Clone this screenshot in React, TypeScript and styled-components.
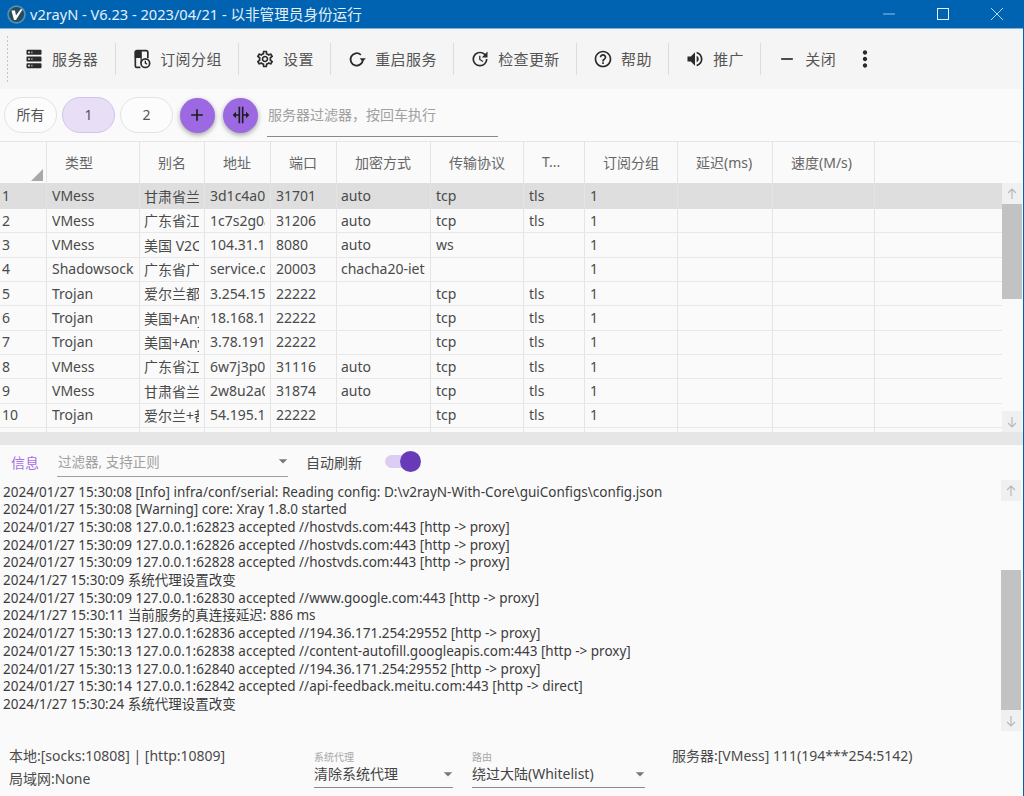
import React from 'react';
import styled, { createGlobalStyle } from 'styled-components';
import {
  MdAdd,
  MdArrowDropDown,
  MdHelpOutline,
  MdMoreVert,
  MdOutlineSettings,
  MdRemove,
  MdUpdate,
  MdVolumeUp,
} from 'react-icons/md';

const FONT = `"Noto Sans", "Noto Sans CJK SC", sans-serif`;
const COLUMNS = '47px 93px 65px 66px 66px 94px 93px 61px 93px 95px 102px 1fr';

const GlobalStyle = createGlobalStyle`
  html, body {
    margin: 0;
    padding: 0;
    background: #fafafa;
  }
  body {
    font-family: ${FONT};
    overflow: hidden;
  }
`;

const Window = styled.div`
  width: 1024px;
  height: 796px;
  display: flex;
  flex-direction: column;
  box-sizing: border-box;
  border-right: 1px solid #0063b1;
  background: #fafafa;
  color: #444;
  overflow: hidden;
`;

const TitleBar = styled.div`
  height: 29px;
  flex: none;
  box-sizing: border-box;
  display: flex;
  align-items: center;
  padding-left: 7px;
  background: #0063b1;
  border-bottom: 1px solid #7fb4de;
`;

const TitleText = styled.div`
  margin-left: 4px;
  padding-bottom: 1px;
  font-size: 14.6px;
  color: #e6f0f8;
  white-space: nowrap;
`;

const WindowControls = styled.div`
  margin-left: auto;
  margin-right: -1px;
  display: flex;
  align-items: center;
`;

const WindowButton = styled.div`
  width: 54px;
  height: 28px;
  display: flex;
  align-items: center;
  justify-content: center;
`;

const ToolBar = styled.div`
  height: 60px;
  flex: none;
  display: flex;
  align-items: center;
  background: #f5f5f5;
  padding-left: 6px;
`;

const Grip = styled.div`
  width: 3px;
  height: 48px;
  margin-right: 15px;
  background-image: radial-gradient(circle, #c4c4c4 1px, transparent 1.1px);
  background-size: 3px 4px;
`;

const ToolButton = styled.div<{ $first?: boolean }>`
  display: flex;
  align-items: center;
  gap: 8px;
  padding: 0 ${(p) => (p.$first ? 17 : 16.3)}px 0 ${(p) => (p.$first ? 0 : 16)}px;
  font-size: 15px;
  letter-spacing: 0.4px;
  color: #555;
  white-space: nowrap;
  svg {
    width: 20px;
    height: 20px;
    color: #2b2b2b;
    flex: none;
  }
`;

const ToolLabel = styled.span`
  margin-bottom: 2px;
`;

const ToolSeparator = styled.div`
  width: 1px;
  height: 32px;
  background: #dcdcdc;
  flex: none;
`;

const MoreButton = styled.div`
  display: flex;
  color: #2b2b2b;
`;

const FilterRow = styled.div`
  height: 52px;
  flex: none;
  display: flex;
  align-items: center;
  padding-left: 4px;
  box-sizing: border-box;
`;

const Chip = styled.div<{ $active?: boolean }>`
  width: 53px;
  height: 36px;
  box-sizing: border-box;
  margin-right: 5px;
  padding-bottom: 2px;
  border-radius: 18px;
  display: flex;
  align-items: center;
  justify-content: center;
  font-size: 14px;
  color: #555;
  background: ${(p) => (p.$active ? '#e8dff6' : '#fcfcfc')};
  border: 1px solid ${(p) => (p.$active ? '#d3c1ee' : '#e3e3e3')};
`;

const RoundButton = styled.div`
  width: 35px;
  height: 35px;
  margin-left: 1.5px;
  margin-right: 7px;
  border-radius: 50%;
  background: #9c69e2;
  display: flex;
  align-items: center;
  justify-content: center;
  color: #1e1e1e;
  box-shadow: 0 2px 5px rgba(0, 0, 0, 0.35);
`;

const ServerFilter = styled.div`
  width: 231px;
  height: 40px;
  margin-left: 2px;
  margin-top: 4px;
  box-sizing: border-box;
  display: flex;
  align-items: center;
  padding: 0 0 5px 1px;
  border-bottom: 1px solid #8a8a8a;
  font-size: 14px;
  color: #a0a0a0;
  white-space: nowrap;
`;

const ServerTable = styled.div`
  height: 291px;
  flex: none;
  box-sizing: border-box;
  display: flex;
  flex-direction: column;
  border-top: 1px solid #e6e6e6;
  border-top-right-radius: 6px;
  border-bottom-left-radius: 6px;
  overflow: hidden;
`;

const HeaderRow = styled.div`
  height: 41px;
  flex: none;
  display: grid;
  grid-template-columns: ${COLUMNS};
`;

const HeaderCell = styled.div`
  position: relative;
  box-sizing: border-box;
  border-right: 1px solid #e4e4e4;
  padding: 0 0 2px 18px;
  display: flex;
  align-items: center;
  font-size: 14px;
  color: #666;
  white-space: nowrap;
  &:last-child {
    border-right: none;
  }
`;

const SortMark = styled.svg`
  position: absolute;
  right: 3px;
  bottom: 2px;
`;

const TableBody = styled.div`
  flex: 1;
  min-height: 0;
  display: flex;
`;

const Rows = styled.div`
  flex: 1;
  min-width: 0;
  overflow: hidden;
`;

const Row = styled.div<{ $selected?: boolean }>`
  height: ${(p) => (p.$selected ? 26 : 24.35)}px;
  box-sizing: border-box;
  display: grid;
  grid-template-columns: ${COLUMNS};
  background: ${(p) => (p.$selected ? '#dedede' : 'transparent')};
  border-bottom: ${(p) => (p.$selected ? 'none' : '1.5px solid #e8e8e8')};
`;

const Cell = styled.div`
  box-sizing: border-box;
  min-width: 0;
  padding: 0 5px 1px;
  border-right: 1px solid #e4e4e4;
  display: flex;
  align-items: center;
  font-size: 14px;
  color: #4a4a4a;
  &:first-child {
    padding: 0 2px 1px;
  }
  &:nth-child(3),
  &:nth-child(6) {
    padding-left: 4px;
  }
  &:last-child {
    border-right: none;
  }
`;

const CellText = styled.div`
  width: 100%;
  overflow: hidden;
  white-space: nowrap;
`;

const ScrollBar = styled.div<{ $right: number }>`
  width: 20px;
  margin-right: ${(p) => p.$right}px;
  flex: none;
  display: flex;
  flex-direction: column;
`;

const ScrollArrow = styled.div`
  height: 21px;
  flex: none;
  background: #f0f0f0;
  display: flex;
  align-items: center;
  justify-content: center;
  color: #b8b8b8;
`;

const ScrollGap = styled.div<{ $size: number }>`
  height: ${(p) => p.$size}px;
  flex: none;
`;

const ScrollFill = styled.div`
  flex: 1;
`;

const ScrollThumb = styled.div<{ $size: number }>`
  height: ${(p) => p.$size}px;
  flex: none;
  background: #c2c2c2;
`;

const Splitter = styled.div`
  height: 13px;
  flex: none;
  background: #e6e6e6;
`;

const LogHeader = styled.div`
  height: 35px;
  flex: none;
  box-sizing: border-box;
  display: flex;
  align-items: center;
  padding: 0 0 2px 11px;
`;

const LogTab = styled.div`
  width: 46px;
  font-size: 14px;
  color: #a66fe6;
`;

const LogFilter = styled.div`
  width: 231px;
  height: 31px;
  box-sizing: border-box;
  padding-left: 1px;
  display: flex;
  align-items: center;
  justify-content: space-between;
  border-bottom: 1px solid #a0a0a0;
  font-size: 13.5px;
  color: #a0a0a0;
`;

const AutoLabel = styled.div`
  margin-left: 18px;
  width: 79px;
  font-size: 14px;
  color: #4a4a4a;
`;

const ToggleTrack = styled.div`
  position: relative;
  width: 30px;
  height: 13px;
  border-radius: 7px;
  background: #dccdf2;
`;

const ToggleThumb = styled.div`
  position: absolute;
  right: -6px;
  top: -4px;
  width: 21px;
  height: 21px;
  border-radius: 50%;
  background: #673ab7;
`;

const LogBody = styled.div`
  height: 251px;
  flex: none;
  display: flex;
`;

const LogLines = styled.div`
  flex: 1;
  min-width: 0;
  padding: 3.5px 0 0 3px;
  font-size: 13.5px;
  line-height: 17.7px;
  color: #3c3c3c;
  white-space: nowrap;
  overflow: hidden;
`;

const StatusBar = styled.div`
  flex: 1;
  display: flex;
  padding: 13px 0 0 9px;
  font-size: 14px;
  color: #4a4a4a;
`;

const StatusLeft = styled.div`
  width: 305px;
  flex: none;
  line-height: 23px;
`;

const Combo = styled.div<{ $width: number }>`
  width: ${(p) => p.$width}px;
  height: 37px;
  margin-right: ${(p) => (p.$width > 150 ? 27 : 19)}px;
  margin-top: 7px;
  flex: none;
  box-sizing: border-box;
  border-bottom: 1px solid #8a8a8a;
  display: flex;
  flex-direction: column;
`;

const ComboLabel = styled.div`
  font-size: 10px;
  line-height: 12px;
  color: #a8a8a8;
`;

const ComboValue = styled.div`
  display: flex;
  align-items: center;
  justify-content: space-between;
  font-size: 14px;
  line-height: 22px;
  color: #444;
  white-space: nowrap;
`;

const StatusRight = styled.div`
  line-height: 23px;
  white-space: nowrap;
`;

const Caret = styled(MdArrowDropDown)`
  color: #777;
  flex: none;
  margin-right: -5px;
`;

const ServerIcon = () => (
  <svg viewBox="0 0 24 24" fill="currentColor">
    <path d="M4,1H20A1,1 0 0,1 21,2V6A1,1 0 0,1 20,7H4A1,1 0 0,1 3,6V2A1,1 0 0,1 4,1M4,9H20A1,1 0 0,1 21,10V14A1,1 0 0,1 20,15H4A1,1 0 0,1 3,14V10A1,1 0 0,1 4,9M4,17H20A1,1 0 0,1 21,18V22A1,1 0 0,1 20,23H4A1,1 0 0,1 3,22V18A1,1 0 0,1 4,17M9,5H10V3H9V5M9,13H10V11H9V13M9,21H10V19H9V21M5,3V5H7V3H5M5,11V13H7V11H5M5,19V21H7V19H5Z" />
  </svg>
);

const BookClockIcon = () => (
  <svg viewBox="0 0 24 24" fill="none" stroke="currentColor" strokeWidth="2">
    <path d="M10 22H6a2 2 0 0 1-2-2V4a2 2 0 0 1 2-2h11a2 2 0 0 1 2 2v7" />
    <path d="M4 3h7v7H4zM11 3v14" fill="currentColor" stroke="currentColor" strokeWidth="1.5" />
    <circle cx="16" cy="17" r="5.2" fill="#f5f5f5" />
    <path d="M16 14.2V17l2 1.2" strokeWidth="1.6" />
  </svg>
);

const RestartIcon = () => (
  <svg viewBox="0 0 24 24" fill="none" stroke="currentColor" strokeWidth="2.2">
    <path d="M16.6 7A7.4 7.4 0 1 0 19 12.5" />
    <path d="M15.2 11.2h7.4l-3.7 4z" fill="currentColor" stroke="none" />
  </svg>
);

const SplitIcon = () => (
  <svg viewBox="0 0 24 24" width="20" height="20" fill="currentColor">
    <path d="M18 16V13H15V22H13V2H15V11H18V8L22 12L18 16M2 12L6 16V13H9V22H11V2H9V11H6V8L2 12Z" />
  </svg>
);

const LogoIcon = () => (
  <svg viewBox="0 0 19 19" width="19" height="19">
    <circle cx="9.5" cy="9.5" r="9.3" fill="#4f93b4" />
    <circle cx="9.5" cy="9.5" r="7.6" fill="#2c4a5a" />
    <path d="M4.4 5.4h3.6l1 5.2 4.6-6.4h2L9 15H7z" fill="#fff" />
  </svg>
);

const ArrowIcon = ({ down }: { down?: boolean }) => (
  <svg viewBox="0 0 12 12" width="12" height="12" fill="none" stroke="currentColor" strokeWidth="1.2">
    <path d={down ? 'M6 1v10M2 7l4 4 4-4' : 'M6 11V1M2 5l4-4 4 4'} />
  </svg>
);

const tools = [
  { label: '服务器', icon: <ServerIcon /> },
  { label: '订阅分组', icon: <BookClockIcon /> },
  { label: '设置', icon: <MdOutlineSettings /> },
  { label: '重启服务', icon: <RestartIcon /> },
  { label: '检查更新', icon: <MdUpdate /> },
  { label: '帮助', icon: <MdHelpOutline /> },
  { label: '推广', icon: <MdVolumeUp /> },
];

const headers = ['', '类型', '别名', '地址', '端口', '加密方式', '传输协议', 'T...', '订阅分组', '延迟(ms)', '速度(M/s)', ''];

const servers = [
  ['VMess', '甘肃省兰州市', '3d1c4a0c.example', '31701', 'auto', 'tcp', 'tls'],
  ['VMess', '广东省江门市', '1c7s2g0a.example', '31206', 'auto', 'tcp', 'tls'],
  ['VMess', '美国 V2CROSS', '104.31.16.8', '8080', 'auto', 'ws', ''],
  ['Shadowsocks', '广东省广州市', 'service.ouluyun', '20003', 'chacha20-ietf-poly1305', '', ''],
  ['Trojan', '爱尔兰都柏林', '3.254.158.21', '22222', '', 'tcp', 'tls'],
  ['Trojan', '美国+Anycast', '18.168.12.9', '22222', '', 'tcp', 'tls'],
  ['Trojan', '美国+Anycast', '3.78.191.44', '22222', '', 'tcp', 'tls'],
  ['VMess', '广东省江门市', '6w7j3p0c.example', '31116', 'auto', 'tcp', 'tls'],
  ['VMess', '甘肃省兰州市', '2w8u2a0d.example', '31874', 'auto', 'tcp', 'tls'],
  ['Trojan', '爱尔兰+都柏林', '54.195.12.7', '22222', '', 'tcp', 'tls'],
];

const logLines = [
  '2024/01/27 15:30:08 [Info] infra/conf/serial: Reading config: D:\\v2rayN-With-Core\\guiConfigs\\config.json',
  '2024/01/27 15:30:08 [Warning] core: Xray 1.8.0 started',
  '2024/01/27 15:30:08 127.0.0.1:62823 accepted //hostvds.com:443 [http -> proxy]',
  '2024/01/27 15:30:09 127.0.0.1:62826 accepted //hostvds.com:443 [http -> proxy]',
  '2024/01/27 15:30:09 127.0.0.1:62828 accepted //hostvds.com:443 [http -> proxy]',
  '2024/1/27 15:30:09 系统代理设置改变',
  '2024/01/27 15:30:09 127.0.0.1:62830 accepted //www.google.com:443 [http -> proxy]',
  '2024/1/27 15:30:11 当前服务的真连接延迟: 886 ms',
  '2024/01/27 15:30:13 127.0.0.1:62836 accepted //194.36.171.254:29552 [http -> proxy]',
  '2024/01/27 15:30:13 127.0.0.1:62838 accepted //content-autofill.googleapis.com:443 [http -> proxy]',
  '2024/01/27 15:30:13 127.0.0.1:62840 accepted //194.36.171.254:29552 [http -> proxy]',
  '2024/01/27 15:30:14 127.0.0.1:62842 accepted //api-feedback.meitu.com:443 [http -> direct]',
  '2024/1/27 15:30:24 系统代理设置改变',
];

const App = () => (
  <>
    <GlobalStyle />
    <Window>
      <TitleBar>
        <LogoIcon />
        <TitleText>v2rayN - V6.23 - 2023/04/21 - 以非管理员身份运行</TitleText>
        <WindowControls>
          <WindowButton>
            <svg width="12" height="12" stroke="#7fb4de" strokeWidth="1.2">
              <path d="M0 6h12" />
            </svg>
          </WindowButton>
          <WindowButton>
            <svg width="12" height="12" fill="none" stroke="#e6f0f8" strokeWidth="1">
              <rect x="0.5" y="0.5" width="11" height="11" />
            </svg>
          </WindowButton>
          <WindowButton>
            <svg width="12" height="12" stroke="#b9d6ec" strokeWidth="1">
              <path d="M0 0l12 12M12 0L0 12" />
            </svg>
          </WindowButton>
        </WindowControls>
      </TitleBar>

      <ToolBar>
        <Grip />
        {tools.map((tool, index) => (
          <React.Fragment key={tool.label}>
            <ToolButton $first={index === 0}>
              {tool.icon}
              <ToolLabel>{tool.label}</ToolLabel>
            </ToolButton>
            <ToolSeparator />
          </React.Fragment>
        ))}
        <ToolButton>
          <MdRemove />
          <ToolLabel>关闭</ToolLabel>
        </ToolButton>
        <MoreButton>
          <MdMoreVert size={26} />
        </MoreButton>
      </ToolBar>

      <FilterRow>
        <Chip>所有</Chip>
        <Chip $active>1</Chip>
        <Chip>2</Chip>
        <RoundButton>
          <MdAdd size={20} />
        </RoundButton>
        <RoundButton>
          <SplitIcon />
        </RoundButton>
        <ServerFilter>服务器过滤器，按回车执行</ServerFilter>
      </FilterRow>

      <ServerTable>
        <HeaderRow>
          {headers.map((header, index) => (
            <HeaderCell key={index}>
              {header}
              {index === 0 && (
                <SortMark width="12" height="12">
                  <path d="M12 0v12H0z" fill="#a8a8a8" />
                </SortMark>
              )}
            </HeaderCell>
          ))}
        </HeaderRow>
        <TableBody>
          <Rows>
            {servers.map((server, index) => (
              <Row key={index} $selected={index === 0}>
                <Cell>
                  <CellText>{index + 1}</CellText>
                </Cell>
                {server.map((value, col) => (
                  <Cell key={col}>
                    <CellText>{value}</CellText>
                  </Cell>
                ))}
                <Cell>
                  <CellText>1</CellText>
                </Cell>
                <Cell />
                <Cell />
                <Cell />
              </Row>
            ))}
            <Row>
              {headers.map((_, col) => (
                <Cell key={col} />
              ))}
            </Row>
          </Rows>
          <ScrollBar $right={1}>
            <ScrollArrow>
              <ArrowIcon />
            </ScrollArrow>
            <ScrollThumb $size={95} />
            <ScrollFill />
            <ScrollArrow>
              <ArrowIcon down />
            </ScrollArrow>
          </ScrollBar>
        </TableBody>
      </ServerTable>

      <Splitter />

      <LogHeader>
        <LogTab>信息</LogTab>
        <LogFilter>
          过滤器, 支持正则
          <Caret size={20} />
        </LogFilter>
        <AutoLabel>自动刷新</AutoLabel>
        <ToggleTrack>
          <ToggleThumb />
        </ToggleTrack>
      </LogHeader>

      <LogBody>
        <LogLines>
          {logLines.map((line, index) => (
            <div key={index}>{line}</div>
          ))}
        </LogLines>
        <ScrollBar $right={2}>
          <ScrollArrow>
            <ArrowIcon />
          </ScrollArrow>
          <ScrollGap $size={69} />
          <ScrollThumb $size={140} />
          <ScrollFill />
          <ScrollArrow>
            <ArrowIcon down />
          </ScrollArrow>
        </ScrollBar>
      </LogBody>

      <StatusBar>
        <StatusLeft>
          <div>本地:[socks:10808] | [http:10809]</div>
          <div>局域网:None</div>
        </StatusLeft>
        <Combo $width={139}>
          <ComboLabel>系统代理</ComboLabel>
          <ComboValue>
            清除系统代理
            <Caret size={20} />
          </ComboValue>
        </Combo>
        <Combo $width={173}>
          <ComboLabel>路由</ComboLabel>
          <ComboValue>
            绕过大陆(Whitelist)
            <Caret size={20} />
          </ComboValue>
        </Combo>
        <StatusRight>服务器:[VMess] 111(194***254:5142)</StatusRight>
      </StatusBar>
    </Window>
  </>
);

export default App;
